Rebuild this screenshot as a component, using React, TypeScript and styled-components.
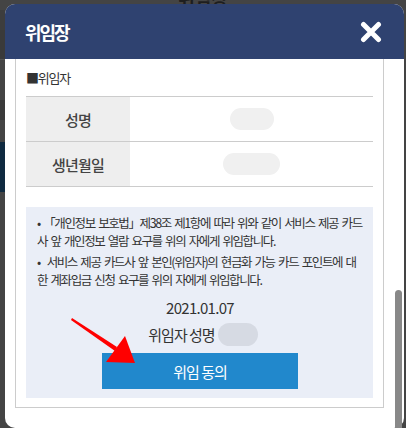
import React from 'react';
import styled, { createGlobalStyle } from 'styled-components';

const GlobalStyle = createGlobalStyle`
  html, body {
    margin: 0;
    padding: 0;
    background: #454545;
  }
  body {
    font-family: "Noto Sans CJK KR", "Noto Sans", sans-serif;
  }
`;

const Screen = styled.div`
  position: relative;
  width: 406px;
  height: 428px;
  overflow: hidden;
  background: #444444;
`;

const PageTitle = styled.div`
  position: absolute;
  top: -15px;
  left: 0;
  right: 0;
  text-align: center;
  font-size: 18px;
  font-weight: 700;
  color: #1e1e1e;
`;

const SideBand = styled.div<{ top: number; height: number; color: string }>`
  position: absolute;
  left: 0;
  width: 8px;
  top: ${p => p.top}px;
  height: ${p => p.height}px;
  background: ${p => p.color};
`;

const Modal = styled.div`
  position: absolute;
  top: 4px;
  left: 5px;
  width: 399px;
  height: 424px;
  background: #fff;
  border-radius: 10px;
  overflow: hidden;
  display: flex;
  flex-direction: column;
`;

const Header = styled.div`
  height: 55px;
  flex-shrink: 0;
  background: #2f4270;
  display: flex;
  align-items: center;
  justify-content: space-between;
  padding: 0 22px 0 20px;
`;

const Title = styled.h1`
  margin: 0;
  font-size: 18px;
  font-weight: 700;
  color: #fff;
  letter-spacing: -2px;
`;

const CloseButton = styled.button`
  border: 0;
  background: none;
  padding: 0;
  width: 22px;
  height: 22px;
  display: flex;
  cursor: pointer;
`;

const Body = styled.div`
  flex: 1;
  padding: 0 20px 20px 10px;
  display: flex;
  flex-direction: column;
`;

const Frame = styled.div`
  flex: 1;
  border: 1px solid #cccccc;
  border-top: 0;
  padding: 0 10px 9px;
  display: flex;
  flex-direction: column;
`;

const SectionLabel = styled.div`
  font-size: 13px;
  color: #333;
  height: 37px;
  display: flex;
  align-items: center;
  letter-spacing: -1.2px;
`;

const Table = styled.div`
  border-bottom: 1px solid #cccccc;
`;

const Row = styled.div`
  display: grid;
  grid-template-columns: 104px 1fr;
  height: 44px;
  border-top: 1px solid #cccccc;
`;

const LabelCell = styled.div`
  background: #eeeeee;
  display: flex;
  align-items: center;
  justify-content: center;
  font-size: 15px;
  font-weight: 500;
  color: #444;
  letter-spacing: -0.8px;
`;

const ValueCell = styled.div`
  display: flex;
  align-items: center;
  justify-content: center;
`;

const Blur = styled.span<{ w: number; h: number; tone: string }>`
  display: inline-block;
  width: ${p => p.w}px;
  height: ${p => p.h}px;
  border-radius: ${p => p.h / 2}px;
  background: ${p => p.tone};
`;

const Notice = styled.div`
  margin-top: auto;
  background: #eaeef7;
  height: 191px;
  padding: 7px 10px 0 11px;
  box-sizing: border-box;
  display: flex;
  flex-direction: column;
  color: #333;
`;

const Para = styled.p`
  margin: 0 0 3px;
  font-size: 12.5px;
  line-height: 18px;
  letter-spacing: -1.4px;
  word-spacing: 2px;
  word-break: break-all;
`;

const DateText = styled.div`
  margin-top: 3px;
  text-align: center;
  font-size: 15px;
  letter-spacing: -0.7px;
  line-height: 26px;
`;

const SignLine = styled.div`
  display: flex;
  align-items: center;
  justify-content: center;
  gap: 3px;
  font-size: 15px;
  letter-spacing: -1px;
  height: 26px;
  padding-left: 6px;
`;

const AgreeButton = styled.button`
  align-self: center;
  margin-top: 6px;
  width: 196px;
  height: 36px;
  border: 0;
  background: #2188cc;
  color: #fff;
  font-family: inherit;
  font-size: 15px;
  letter-spacing: -1px;
  cursor: pointer;
`;

const Arrow = styled.svg`
  position: absolute;
  left: 0;
  top: 0;
  pointer-events: none;
`;

const Scrollbar = styled.div`
  position: absolute;
  left: 395px;
  top: 290px;
  width: 7px;
  height: 150px;
  border-radius: 4px;
  background: #888888;
`;

const App: React.FC = () => {
  return (
    <>
      <GlobalStyle />
      <Screen>
        <PageTitle>위임장</PageTitle>
        <SideBand top={10} height={20} color="#3d3d3d" />
        <SideBand top={30} height={29} color="#3a3a3a" />
        <SideBand top={59} height={1} color="#555" />
        <SideBand top={100} height={20} color="#3a3a3a" />
        <SideBand top={142} height={50} color="#0f2a40" />
        <Modal>
          <Header>
            <Title>위임장</Title>
            <CloseButton aria-label="닫기">
              <svg width="22" height="22" viewBox="0 0 22 22">
                <path d="M3.5 3.5 L18.5 18.5 M18.5 3.5 L3.5 18.5" stroke="#fff" strokeWidth="5" strokeLinecap="round" />
              </svg>
            </CloseButton>
          </Header>
          <Body>
            <Frame>
              <SectionLabel>■위임자</SectionLabel>
              <Table>
                <Row>
                  <LabelCell>성명</LabelCell>
                  <ValueCell>
                    <Blur w={44} h={22} tone="#f0f0f0" />
                  </ValueCell>
                </Row>
                <Row>
                  <LabelCell>생년월일</LabelCell>
                  <ValueCell>
                    <Blur w={57} h={22} tone="#f0f0f0" />
                  </ValueCell>
                </Row>
              </Table>
              <Notice>
                <Para>• 「개인정보 보호법」제38조 제1항에 따라 위와 같이 서비스 제공 카드사 앞 개인정보 열람 요구를 위의 자에게 위임합니다.</Para>
                <Para>• &nbsp;서비스 제공 카드사 앞 본인(위임자)의 현금화 가능 카드 포인트에 대한 계좌입금 신청 요구를 위의 자에게 위임합니다.</Para>
                <DateText>2021.01.07</DateText>
                <SignLine>
                  위임자 성명
                  <Blur w={40} h={23} tone="#d6dae3" />
                </SignLine>
                <AgreeButton>위임 동의</AgreeButton>
              </Notice>
            </Frame>
          </Body>
        </Modal>
        <Arrow width="406" height="428" viewBox="0 0 406 428">
          <polygon points="72,318 117,347 115,351 71,320" fill="#ff0000" />
          <polygon points="125,336 135,363 106,362" fill="#ff0000" />
        </Arrow>
        <Scrollbar />
      </Screen>
    </>
  );
};

export default App;
